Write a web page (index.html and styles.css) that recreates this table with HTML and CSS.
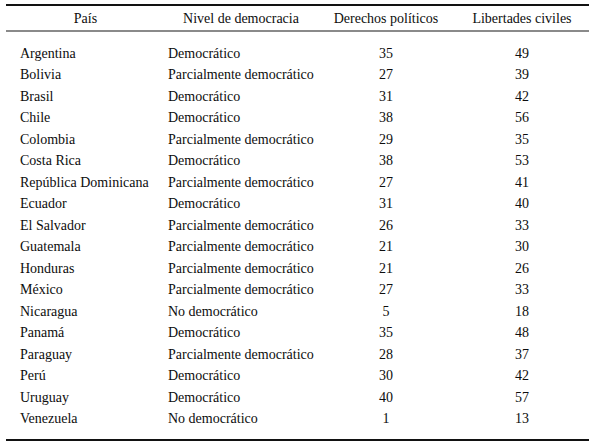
FILE: index.html
```html
<!DOCTYPE html>
<html lang="es">
<head>
<meta charset="utf-8">
<title>Nivel de democracia</title>
<link rel="stylesheet" href="styles.css">
</head>
<body>
<table class="data">
  <colgroup>
    <col class="c1"><col class="c2"><col class="c3"><col class="c4">
  </colgroup>
  <thead>
    <tr><th>País</th><th>Nivel de democracia</th><th>Derechos políticos</th><th>Libertades civiles</th></tr>
  </thead>
  <tbody>
    <tr><td class="pais">Argentina</td><td class="nivel">Democrático</td><td class="num">35</td><td class="num">49</td></tr>
    <tr><td class="pais">Bolivia</td><td class="nivel">Parcialmente democrático</td><td class="num">27</td><td class="num">39</td></tr>
    <tr><td class="pais">Brasil</td><td class="nivel">Democrático</td><td class="num">31</td><td class="num">42</td></tr>
    <tr><td class="pais">Chile</td><td class="nivel">Democrático</td><td class="num">38</td><td class="num">56</td></tr>
    <tr><td class="pais">Colombia</td><td class="nivel">Parcialmente democrático</td><td class="num">29</td><td class="num">35</td></tr>
    <tr><td class="pais">Costa Rica</td><td class="nivel">Democrático</td><td class="num">38</td><td class="num">53</td></tr>
    <tr><td class="pais">República Dominicana</td><td class="nivel">Parcialmente democrático</td><td class="num">27</td><td class="num">41</td></tr>
    <tr><td class="pais">Ecuador</td><td class="nivel">Democrático</td><td class="num">31</td><td class="num">40</td></tr>
    <tr><td class="pais">El Salvador</td><td class="nivel">Parcialmente democrático</td><td class="num">26</td><td class="num">33</td></tr>
    <tr><td class="pais">Guatemala</td><td class="nivel">Parcialmente democrático</td><td class="num">21</td><td class="num">30</td></tr>
    <tr><td class="pais">Honduras</td><td class="nivel">Parcialmente democrático</td><td class="num">21</td><td class="num">26</td></tr>
    <tr><td class="pais">México</td><td class="nivel">Parcialmente democrático</td><td class="num">27</td><td class="num">33</td></tr>
    <tr><td class="pais">Nicaragua</td><td class="nivel">No democrático</td><td class="num">5</td><td class="num">18</td></tr>
    <tr><td class="pais">Panamá</td><td class="nivel">Democrático</td><td class="num">35</td><td class="num">48</td></tr>
    <tr><td class="pais">Paraguay</td><td class="nivel">Parcialmente democrático</td><td class="num">28</td><td class="num">37</td></tr>
    <tr><td class="pais">Perú</td><td class="nivel">Democrático</td><td class="num">30</td><td class="num">42</td></tr>
    <tr><td class="pais">Uruguay</td><td class="nivel">Democrático</td><td class="num">40</td><td class="num">57</td></tr>
    <tr><td class="pais">Venezuela</td><td class="nivel">No democrático</td><td class="num">1</td><td class="num">13</td></tr>
  </tbody>
</table>
</body>
</html>
```

FILE: styles.css
```css
html, body {
  margin: 0;
  padding: 0;
  background: #ffffff;
}

body {
  font-family: "Liberation Serif", "Times New Roman", serif;
  font-size: 14px;
  color: #0d0d0d;
}

.data {
  margin: 4px 0 0 6px;
  width: 583px;
  border-collapse: separate;
  border-spacing: 0;
  table-layout: fixed;
}

.c1 { width: 159px; }
.c2 { width: 152px; }
.c3 { width: 138px; }
.c4 { width: 134px; }

.data th {
  font-weight: normal;
  text-align: center;
  padding: 1px 0 0 0;
  line-height: 23px;
  height: 23px;
  border-top: 2px solid #121212;
  border-bottom: 2px solid #8a8a8a;
  white-space: nowrap;
}

.data td {
  padding: 0;
  line-height: 21.5px;
  height: 21.5px;
  white-space: nowrap;
}

.data tbody tr:first-child td {
  padding-top: 10.5px;
}

.data tbody tr:last-child td {
  padding-bottom: 9.5px;
  border-bottom: 2px solid #121212;
}

.pais {
  padding-left: 14px !important;
  text-align: left;
}

.nivel {
  padding-left: 3px !important;
  text-align: left;
}

.num {
  text-align: center;
}
```
